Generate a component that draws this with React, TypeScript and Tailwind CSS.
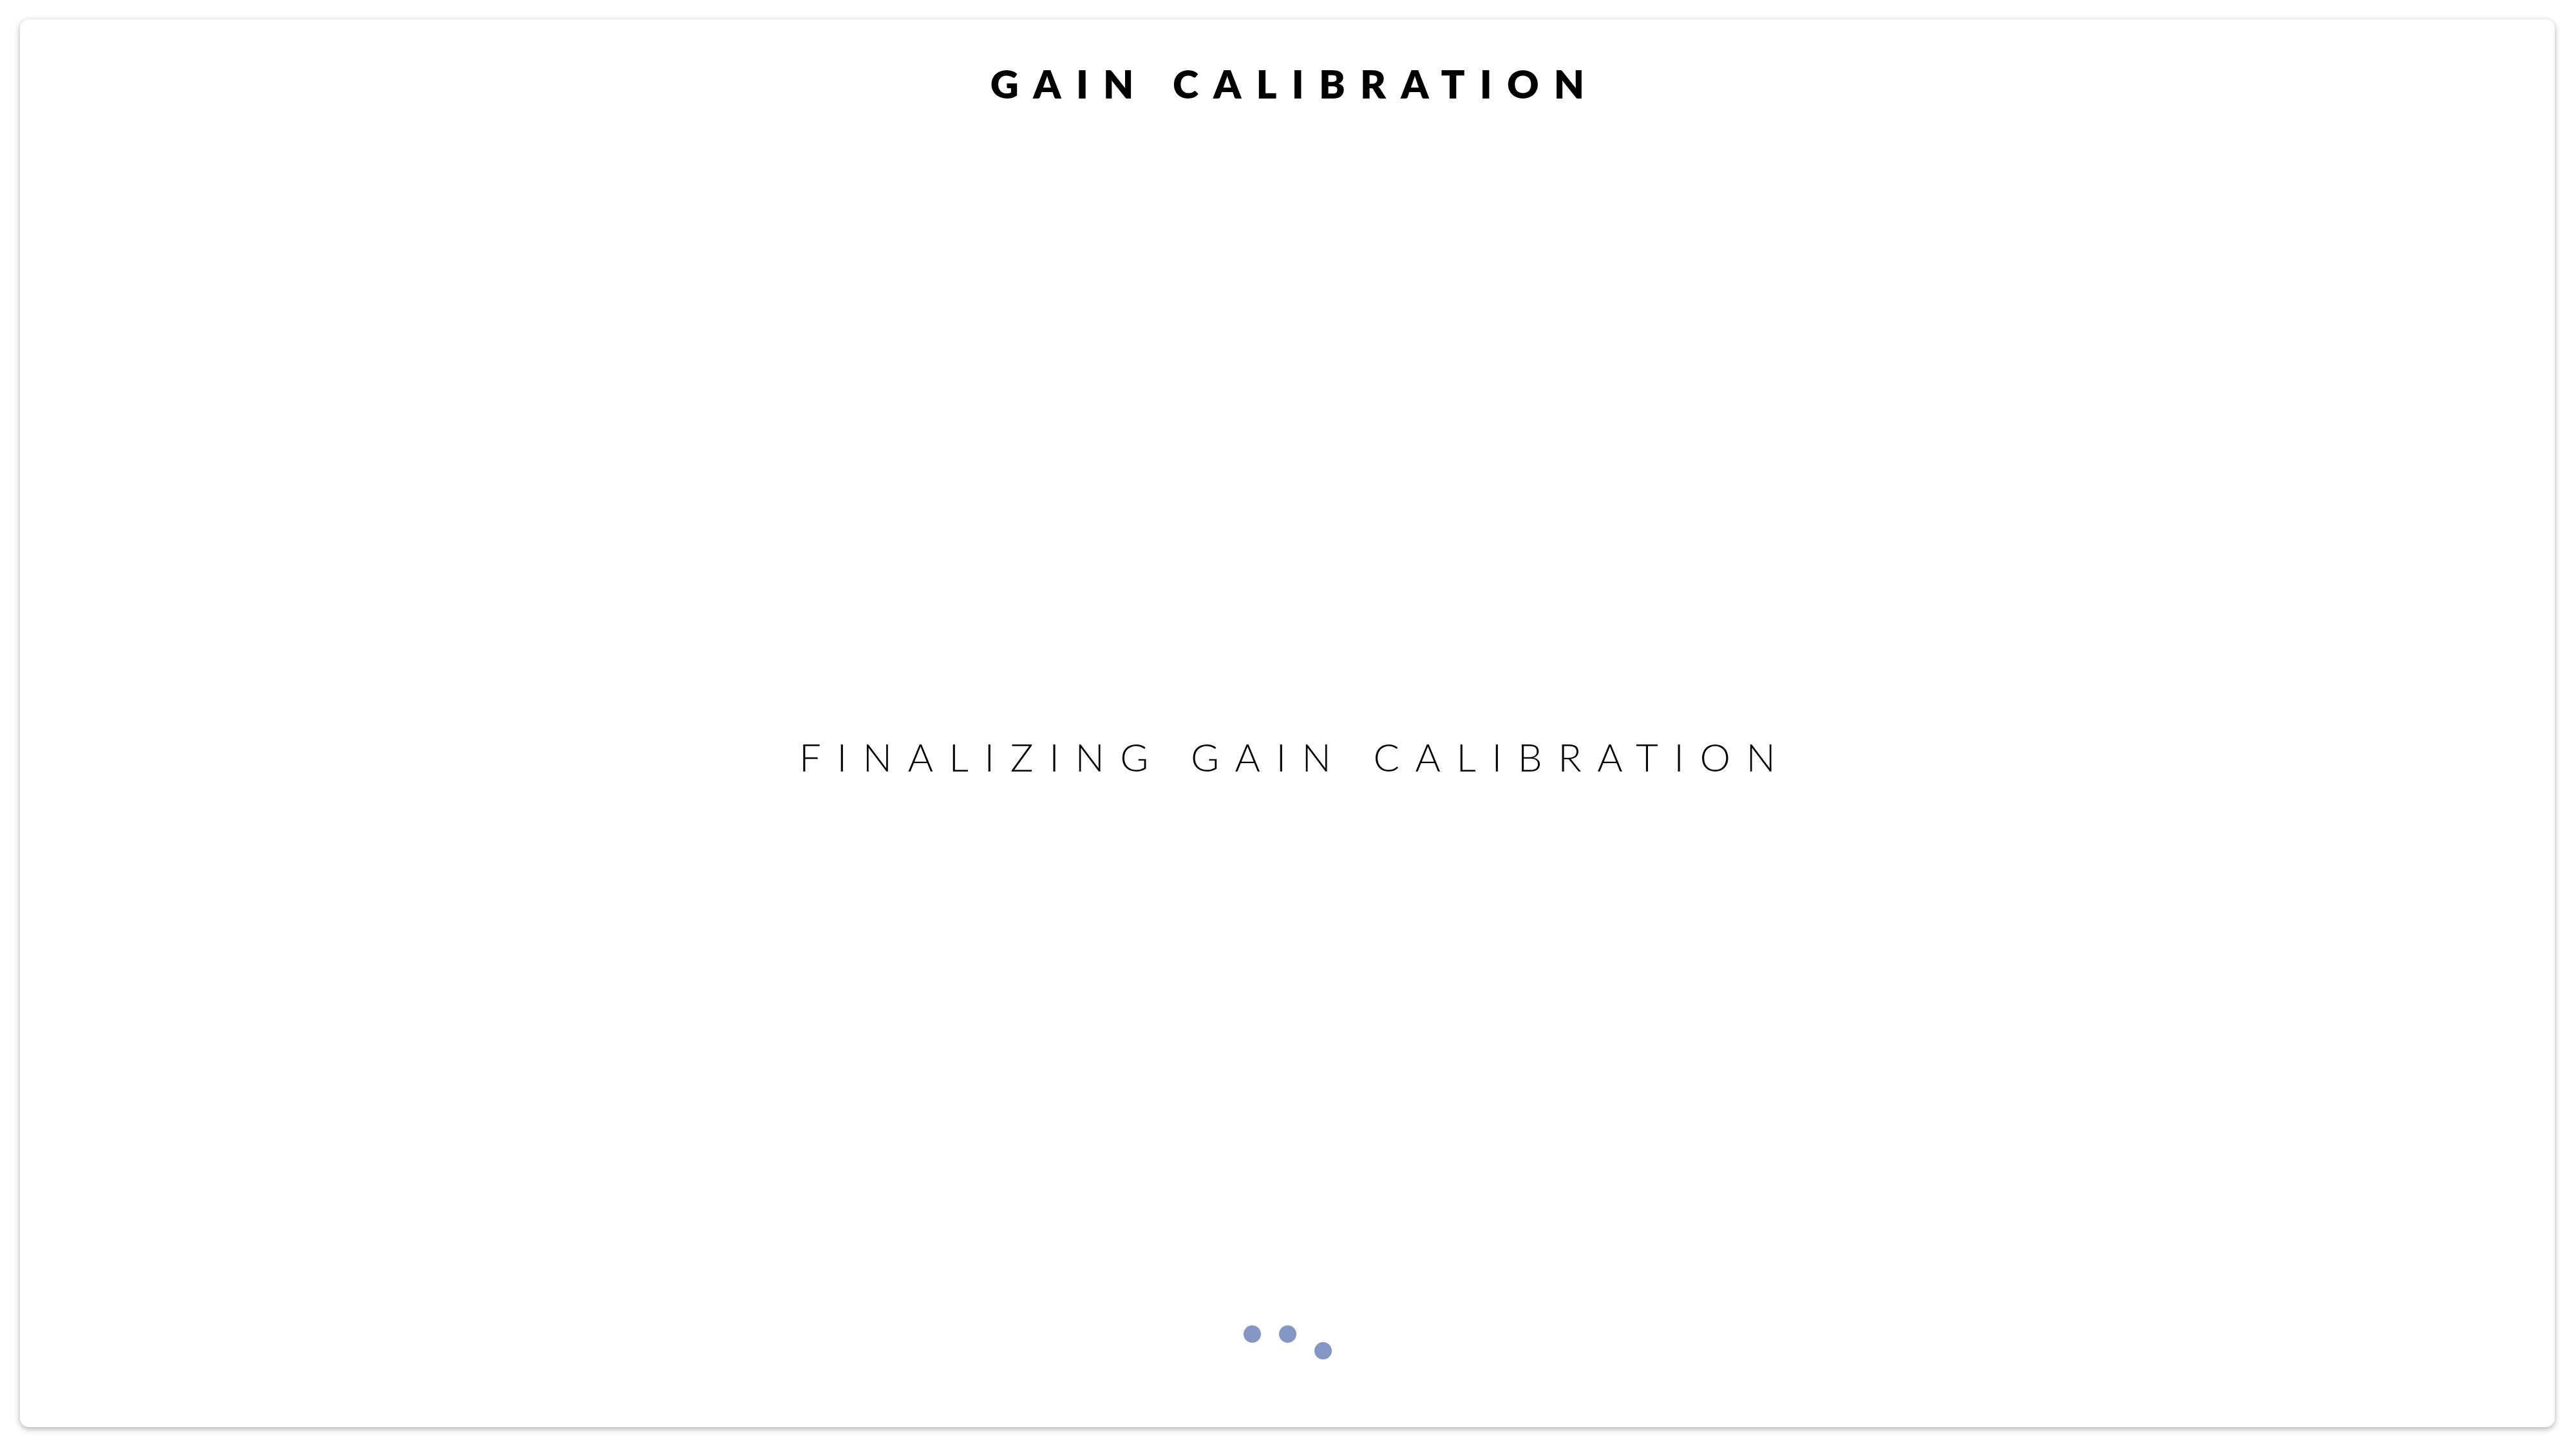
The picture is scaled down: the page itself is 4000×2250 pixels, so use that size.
import React from "react";

// Calibration progress screen: title, status line and a three-dot loader
export default function App() {
  const dots = [0, 1, 2];

  return (
    <div className="h-screen w-screen bg-white pt-[30px] pl-[31px] pr-[33px] pb-[34px]">
      <div
        className="flex h-full w-full flex-col items-center rounded-[14px] bg-white shadow-[0_3px_10px_rgba(0,0,0,0.32)]"
        style={{ fontFamily: "Lato, 'Open Sans', sans-serif" }}
      >
        <h1 className="whitespace-nowrap pt-[69px] pl-[0.38em] text-[61px] font-extrabold leading-none tracking-[0.38em] text-black">
          GAIN CALIBRATION
        </h1>

        <p className="mt-[985px] whitespace-nowrap pl-[0.41em] text-[60px] font-light leading-none tracking-[0.41em] text-black">
          FINALIZING GAIN CALIBRATION
        </p>

        {/* loader dots, last one mid-bounce */}
        <div className="mt-[853px] flex items-start gap-[28px]">
          {dots.map((d) => (
            <span
              key={d}
              className={`block h-[27px] w-[27px] rounded-full bg-[#8497c4] ${
                d === 2 ? "mt-[26px]" : ""
              }`}
            />
          ))}
        </div>
      </div>
    </div>
  );
}
